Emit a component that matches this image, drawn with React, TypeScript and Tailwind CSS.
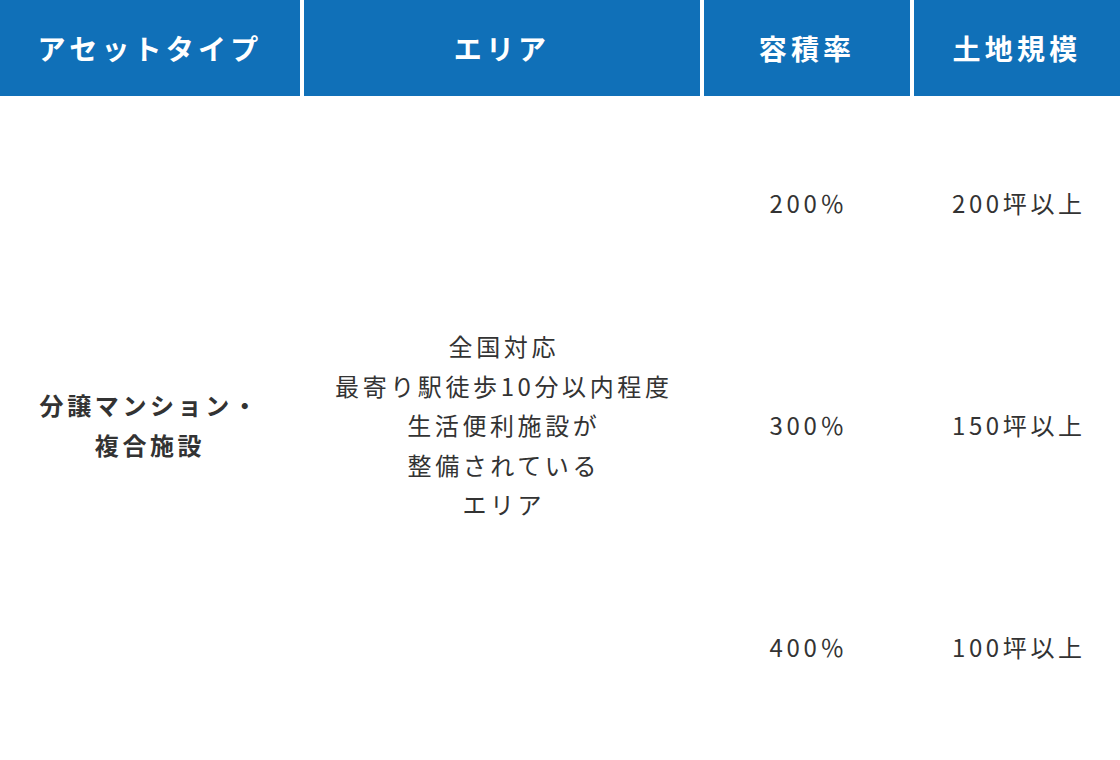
const headers = ['アセットタイプ', 'エリア', '容積率', '土地規模'];

const rows = [
  { ratio: '200％', size: '200坪以上' },
  { ratio: '300％', size: '150坪以上' },
  { ratio: '400％', size: '100坪以上' },
];

export default function App() {
  return (
    <div className="w-[1120px] h-[760px] overflow-hidden bg-white font-['Noto_Sans_CJK_JP','Noto_Sans',sans-serif] text-[#333333]">
      {/* header */}
      <div className="grid grid-cols-[300px_396px_206px_206px] gap-x-1 h-24">
        {headers.map((h) => (
          <div
            key={h}
            className="flex items-center justify-center bg-[#1070b8] text-white text-[28px] font-bold tracking-[0.15em]"
          >
            {h}
          </div>
        ))}
      </div>

      {/* body */}
      <div className="grid grid-cols-[300px_396px_412px] gap-x-1 -mt-1 text-2xl tracking-[0.15em] leading-[1.65]">
        <div className="flex items-center justify-center text-center font-bold">
          <p>
            分譲マンション・
            <br />
            複合施設
          </p>
        </div>
        <div className="flex items-center justify-center text-center pl-[0.15em]">
          <p>
            全国対応
            <br />
            最寄り駅徒歩10分以内程度
            <br />
            生活便利施設が
            <br />
            整備されている
            <br />
            エリア
          </p>
        </div>
        <div className="flex flex-col">
          {rows.map((r) => (
            <div key={r.ratio} className="grid grid-cols-[206px_206px] gap-x-1 h-[222px]">
              <div className="flex items-center justify-center pl-[0.15em]">{r.ratio}</div>
              <div className="flex items-center justify-center pl-[0.15em]">{r.size}</div>
            </div>
          ))}
        </div>
      </div>
    </div>
  );
}
